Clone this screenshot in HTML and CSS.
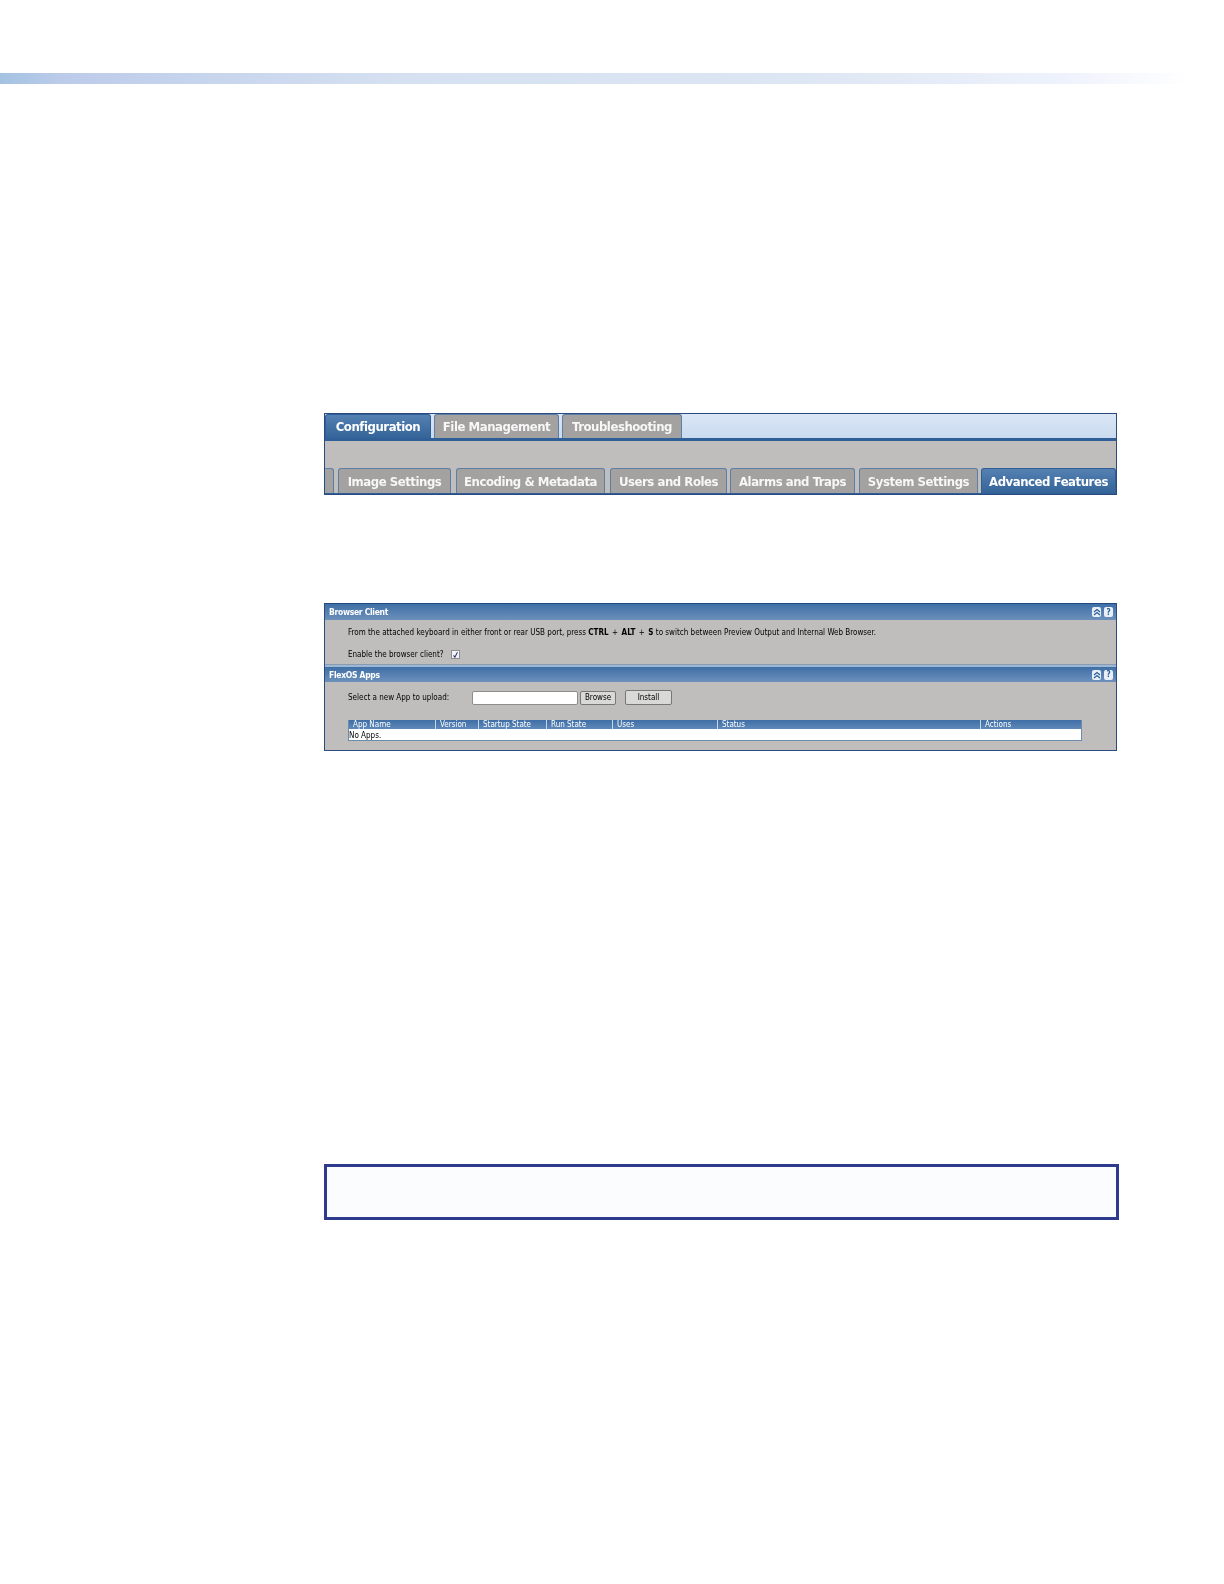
FILE: index.html
```html
<!DOCTYPE html>
<html lang="en">

<head>
    <meta charset="UTF-8">
    <title>Advanced Features</title>
    <link rel="stylesheet" href="styles.css">
</head>

<body>
    <div class="band"></div>

    <div class="shot tabs">
        <div class="mainTabs">
            <span class="tab active t1">Configuration</span>
            <span class="tab t2">File Management</span>
            <span class="tab t3">Troubleshooting</span>
        </div>
        <div class="subTabs">
            <span class="tab s0"></span>
            <span class="tab s1">Image Settings</span>
            <span class="tab s2">Encoding &amp; Metadata</span>
            <span class="tab s3">Users and Roles</span>
            <span class="tab s4">Alarms and Traps</span>
            <span class="tab s5">System Settings</span>
            <span class="tab active s6">Advanced Features</span>
        </div>
    </div>

    <div class="shot panels">
        <div class="panelHead first">
            <span>Browser Client</span>
            <span class="headBtns">
                <span class="btn"><svg viewBox="0 0 8 8" width="8" height="8"><path d="M1 4 L4 1.5 L7 4 M1 7 L4 4.5 L7 7" fill="none" stroke="#2f5f96" stroke-width="1.3"/></svg></span>
                <span class="btn">?</span>
            </span>
        </div>
        <div class="panelBody browser">
            <p class="line">From the attached keyboard in either front or rear USB port, press <b>CTRL</b><span class="plus">+</span><b>ALT</b><span class="plus">+</span><b>S</b> to switch between Preview Output and Internal Web Browser.</p>
            <p class="line enable">Enable the browser client?
                <span class="check"><svg viewBox="0 0 9 9" width="8" height="8"><path d="M2 5 L3.7 7.5 L7 1" fill="none" stroke="#2b2f80" stroke-width="1.3"/></svg></span>
            </p>
        </div>
        <div class="panelHead second">
            <span>FlexOS Apps</span>
            <span class="headBtns">
                <span class="btn"><svg viewBox="0 0 8 8" width="8" height="8"><path d="M1 4 L4 1.5 L7 4 M1 7 L4 4.5 L7 7" fill="none" stroke="#2f5f96" stroke-width="1.3"/></svg></span>
                <span class="btn">?</span>
            </span>
        </div>
        <div class="panelBody apps">
            <div class="upload">
                <span class="uploadLabel">Select a new App to upload:</span>
                <span class="field"></span>
                <span class="browse">Browse</span>
                <span class="install">Install</span>
            </div>
            <div class="appTable">
                <div class="appHead">
                    <span>App Name</span>
                    <span>Version</span>
                    <span>Startup State</span>
                    <span>Run State</span>
                    <span>Uses</span>
                    <span>Status</span>
                    <span>Actions</span>
                </div>
                <div class="appRow">No Apps.</div>
            </div>
        </div>
    </div>

    <div class="note"></div>
</body>

</html>
```

FILE: styles.css
```css
body {
    margin: 0;
    background-color: #fff;
    font-family: "DejaVu Sans Condensed", "DejaVu Sans", Verdana, sans-serif;
    font-stretch: condensed;
}

.band {
    margin-top: 73px;
    height: 11px;
    background: linear-gradient(to right, #a3c2e2 0, #bccbea 60px, #d5e1f1 400px, #dde6f3 800px, #eef2fc 1060px, #fff 1190px);
}

.shot {
    margin-left: 324px;
    width: 793px;
    box-sizing: border-box;
    filter: blur(0.3px);
}

/* Tab screenshot */
.tabs {
    margin-top: 329px;
    height: 82px;
    border: 1px solid #2b4a80;
    background-color: #bfbebd;
}

.mainTabs {
    display: flex;
    height: 24px;
    gap: 4px;
    border-bottom: 3px solid #2f5f96;
    background: linear-gradient(#dbe7f5, #c9dbef);
}

.subTabs {
    display: flex;
    margin-top: 27px;
    height: 26px;
    gap: 4px;
    border-bottom: 1px solid #2f5f96;
    box-sizing: border-box;
}

.tab {
    display: flex;
    align-items: center;
    justify-content: center;
    box-sizing: border-box;
    border: 1px solid #5d7fa6;
    border-bottom: 0;
    border-radius: 3px 3px 0 0;
    background-color: #a3a2a1;
    color: #f7f7f7;
    font-size: 13px;
    font-weight: bold;
    letter-spacing: -0.45px;
    white-space: nowrap;
}

.tab.active {
    background: linear-gradient(#5580b2, #346499);
    border-color: #2f5f96;
    color: #fff;
}

.t1 { width: 106px; margin-right: -1px; }
.t2 { width: 125px; margin-right: -1px; }
.t3 { width: 120px; }

.s0 { width: 9px; border-left: 0; border-radius: 0 3px 0 0; }
.s1 { width: 113px; margin-right: 1px; }
.s2 { width: 149px; margin-right: 1px; }
.s3 { width: 117px; margin-right: -1px; }
.s4 { width: 125px; }
.s5 { width: 119px; margin-right: -1px; }
.s6 { width: 135px; }

/* Panel screenshot */
.panels {
    margin-top: 108px;
    height: 148px;
    border: 1px solid #2b4a80;
    border-top-color: #1f4a80;
    background-color: #bfbebd;
    color: #000;
    font-size: 8px;
}

.panelHead {
    display: flex;
    align-items: center;
    justify-content: space-between;
    padding: 0 3px 0 4px;
    background: linear-gradient(#3f6fa6, #6c90bb);
    color: #fff;
    font-size: 8.5px;
    font-weight: bold;
    letter-spacing: -0.3px;
}

.panelHead.first {
    height: 16px;
}

.panelHead.second {
    height: 15px;
    border-top: 2px solid #9db8d6;
}

.headBtns {
    display: flex;
    gap: 3px;
}

.btn {
    display: flex;
    align-items: center;
    justify-content: center;
    width: 9px;
    height: 10px;
    border-radius: 2px;
    background-color: #e8eff7;
    color: #2f5f96;
    font-size: 8px;
    font-weight: bold;
}

.panelBody {
    padding-left: 23px;
}

.browser {
    height: 45px;
    box-sizing: border-box;
    padding-top: 7px;
    border-bottom: 1px solid #8a9bb0;
}

.line {
    margin: 0;
    height: 11px;
    line-height: 11px;
    white-space: nowrap;
}

.plus {
    margin: 0 3.5px;
}

.enable {
    display: flex;
    align-items: center;
    gap: 7px;
    margin-top: 11px;
}

.check {
    display: flex;
    align-items: center;
    justify-content: center;
    box-sizing: border-box;
    width: 9px;
    height: 9px;
    border: 1px solid #8d8d8d;
    background-color: #f4f4f4;
}

.apps {
    padding-top: 8px;
}

.upload {
    display: flex;
    align-items: center;
    height: 15px;
}

.uploadLabel {
    width: 124px;
}

.field {
    width: 106px;
    height: 14px;
    box-sizing: border-box;
    border: 1px solid #8d8d8d;
    border-radius: 2px;
    background-color: #fff;
}

.browse,
.install {
    display: flex;
    align-items: center;
    justify-content: center;
    box-sizing: border-box;
    height: 14px;
    border: 1px solid #777;
    border-radius: 2px;
    background-color: #d9d9d7;
}

.browse {
    width: 36px;
    margin-left: 2px;
}

.install {
    width: 47px;
    height: 15px;
    margin-left: 9px;
}

.appTable {
    margin-top: 15px;
    width: 734px;
    box-sizing: border-box;
    border: 1px solid #6d8db0;
    border-top: 0;
    background-color: #fff;
}

.appHead {
    display: grid;
    grid-template-columns: 87px 43px 68px 66px 105px 263px 1fr;
    height: 9px;
    line-height: 9px;
    background: linear-gradient(#3f6fa6, #5f88b8);
    color: #fff;
}

.appHead span {
    padding-left: 4px;
    border-right: 1px solid #c6d4e4;
}

.appHead span:last-child {
    border-right: 0;
}

.appRow {
    height: 10px;
    padding-top: 1px;
    line-height: 11px;
    color: #000;
}

/* Empty note box */
.note {
    margin: 413px 0 0 324px;
    width: 795px;
    height: 56px;
    box-sizing: border-box;
    border: 3px solid #2e3a8c;
    background-color: #fafcfe;
}
```
